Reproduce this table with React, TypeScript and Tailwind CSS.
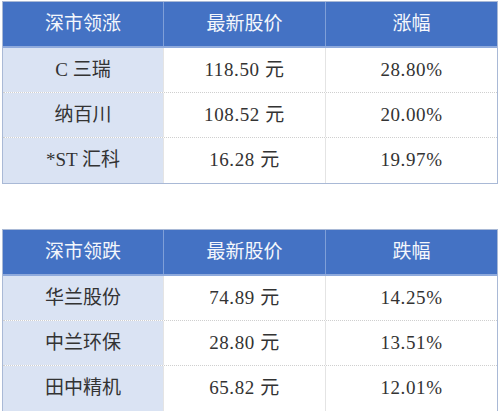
import React from 'react';

type Row = [string, string, string];

interface StockTableProps {
  title: string;
  changeLabel: string;
  rows: Row[];
}

const font = { fontFamily: '"Liberation Serif", "Noto Sans CJK SC", serif' };

const StockTable: React.FC<StockTableProps> = ({ title, changeLabel, rows }) => (
  <div className="border border-[#a9b9d6] bg-white" style={font}>
    <div className="grid grid-cols-[161px_162px_1fr] h-[46px] bg-[#4472c4] text-[#f4f7fc] text-[19px] border-b-2 border-[#8faadc]">
      <div className="flex items-center justify-center border-r border-[#7f9fd8]">{title}</div>
      <div className="flex items-center justify-center border-r border-[#7f9fd8]">最新股价</div>
      <div className="flex items-center justify-center">{changeLabel}</div>
    </div>
    {rows.map((r, i) => (
      <div
        key={r[0]}
        className={`grid grid-cols-[161px_162px_1fr] h-[45px] text-[19px] text-[#333333] ${
          i < rows.length - 1 ? 'border-b border-dotted border-[#cfcfcf]' : ''
        }`}
      >
        <div className="flex items-center justify-center bg-[#dae3f3] border-r border-[#e4e4e4]">{r[0]}</div>
        <div className="flex items-center justify-center border-r border-[#e4e4e4] tracking-[0.6px]">{r[1]}</div>
        <div className="flex items-center justify-center tracking-[0.6px]">{r[2]}</div>
      </div>
    ))}
  </div>
);

export default function App() {
  return (
    <div className="w-[500px] h-[411px] bg-white overflow-hidden pt-px px-[2px]">
      <StockTable
        title="深市领涨"
        changeLabel="涨幅"
        rows={[
          ['C 三瑞', '118.50 元', '28.80%'],
          ['纳百川', '108.52 元', '20.00%'],
          ['*ST 汇科', '16.28 元', '19.97%'],
        ]}
      />
      <div className="h-[45px]" />
      <StockTable
        title="深市领跌"
        changeLabel="跌幅"
        rows={[
          ['华兰股份', '74.89 元', '14.25%'],
          ['中兰环保', '28.80 元', '13.51%'],
          ['田中精机', '65.82 元', '12.01%'],
        ]}
      />
    </div>
  );
}
